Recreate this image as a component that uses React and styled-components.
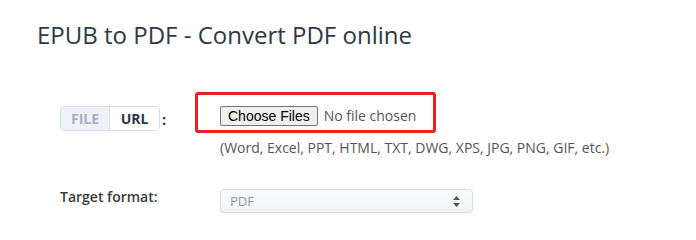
import React from "react";
import styled, { createGlobalStyle } from "styled-components";

const Global = createGlobalStyle`
  html, body { margin: 0; padding: 0; background: #ffffff; }
  body { font-family: "Open Sans", "Liberation Sans", sans-serif; }
`;

const Page = styled.div`
  width: 696px;
  height: 240px;
  overflow: hidden;
  background: #fff;
`;

const Title = styled.h1`
  margin: 0;
  padding: 19px 0 0 37px;
  font-family: "Open Sans", sans-serif;
  font-weight: 400;
  font-size: 24px;
  line-height: 32px;
  color: #2e3846;
`;

const Form = styled.div`
  display: grid;
  grid-template-columns: 135px 1fr;
  margin: 41px 0 0 60px;
`;

const LabelCell = styled.div`
  display: flex;
  align-items: center;
  gap: 2px;
  padding-top: ${(p) => p.$top || 0}px;
  font-family: "Open Sans", sans-serif;
  font-size: 14px;
  line-height: 18px;
  font-weight: 600;
  color: #333;
  align-self: start;
`;

const Toggle = styled.div`
  display: flex;
  height: 25px;
  border: 1px solid #d7dfe8;
  border-radius: 4px;
  overflow: hidden;
  box-sizing: border-box;
`;

const Seg = styled.div`
  width: ${(p) => p.$w}px;
  display: flex;
  align-items: center;
  justify-content: center;
  font-family: "Open Sans", sans-serif;
  font-weight: 700;
  font-size: 14px;
  background: ${(p) => (p.$active ? "#fff" : "#eef2f7")};
  color: ${(p) => (p.$active ? "#2d3748" : "#a3b0c1")};
  border-left: ${(p) => (p.$divider ? "1px solid #d7dfe8" : "none")};
`;

const Colon = styled.span`
  font-weight: 700;
  font-size: 15px;
  color: #333;
`;

const Highlight = styled.div`
  box-sizing: border-box;
  width: 241px;
  height: 41px;
  border: 3px solid #e8231e;
  border-radius: 3px;
  display: flex;
  align-items: flex-start;
  gap: 6px;
  padding: 11px 0 0 22px;
`;

const FakeButton = styled.button`
  box-sizing: border-box;
  height: 20px;
  padding: 0 7px;
  background: #efefef;
  border: 1px solid #767676;
  border-radius: 2px;
  font-family: "Liberation Sans", Arial, sans-serif;
  font-size: 14px;
  line-height: 18px;
  color: #000;
`;

const FileState = styled.span`
  font-family: "Open Sans", sans-serif;
  font-size: 14px;
  line-height: 20px;
  color: #555;
`;

const Hint = styled.div`
  grid-column: 2;
  margin: 5px 0 0 25px;
  font-family: "Open Sans", sans-serif;
  font-size: 14px;
  line-height: 20px;
  color: #555;
`;

const SelectBox = styled.div`
  margin: 31px 0 0 25px;
  box-sizing: border-box;
  width: 253px;
  height: 24px;
  border: 1px solid #d3dce6;
  border-radius: 4px;
  background: linear-gradient(#fafbfc, #f1f4f7);
  display: flex;
  align-items: center;
  justify-content: space-between;
  padding: 0 12px 0 9px;
  font-family: "Open Sans", sans-serif;
  font-size: 13px;
  color: #8d97a3;
`;

const TargetLabel = styled(LabelCell)`
  margin-top: 30px;
  color: #3a3a3a;
`;

const Arrows = styled.svg`
  display: block;
`;

export default function App() {
  return (
    <Page>
      <Global />
      <Title>EPUB to PDF - Convert PDF online</Title>
      <Form>
        <LabelCell $top={14}>
          <Toggle>
            <Seg $w={48}>FILE</Seg>
            <Seg $w={49} $active $divider>URL</Seg>
          </Toggle>
          <Colon>:</Colon>
        </LabelCell>
        <Highlight>
          <FakeButton type="button">Choose Files</FakeButton>
          <FileState>No file chosen</FileState>
        </Highlight>
        <Hint>(Word, Excel, PPT, HTML, TXT, DWG, XPS, JPG, PNG, GIF, etc.)</Hint>
        <TargetLabel>Target format:</TargetLabel>
        <SelectBox>
          <span>PDF</span>
          <Arrows width="7" height="11" viewBox="0 0 7 11">
            <path d="M3.5 0 L7 4 L0 4 Z" fill="#555" />
            <path d="M0 7 L7 7 L3.5 11 Z" fill="#555" />
          </Arrows>
        </SelectBox>
      </Form>
    </Page>
  );
}
